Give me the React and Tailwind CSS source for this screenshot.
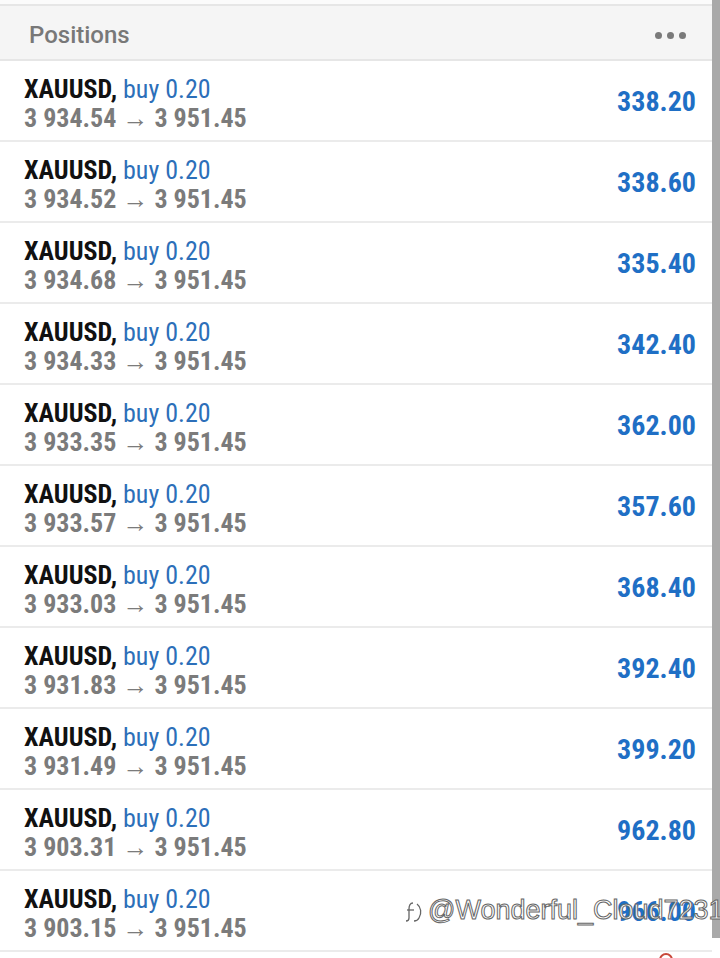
import React from 'react';

const rows = [
  ['3 934.54', '338.20'],
  ['3 934.52', '338.60'],
  ['3 934.68', '335.40'],
  ['3 934.33', '342.40'],
  ['3 933.35', '362.00'],
  ['3 933.57', '357.60'],
  ['3 933.03', '368.40'],
  ['3 931.83', '392.40'],
  ['3 931.49', '399.20'],
  ['3 903.31', '962.80'],
  ['3 903.15', '966.00'],
];

const font = { fontFamily: '"Roboto Condensed", "Liberation Sans Narrow", Roboto, sans-serif' };

const PositionRow = ({ open, profit }) => (
  <div className="h-[81px] shrink-0 border-b-2 border-[#ebebeb] flex items-center justify-between pl-[24px] pr-[16px]">
    <div className="flex flex-col pt-[6px]">
      <div className="text-[26px] leading-[29px] whitespace-nowrap">
        <span className="font-bold text-[#111]">XAUUSD,</span>{' '}
        <span className="text-[#2c6fb9]">buy 0.20</span>
      </div>
      <div className="text-[26px] leading-[29px] font-bold text-[#7b7b7b] whitespace-nowrap">
        {open} → 3 951.45
      </div>
    </div>
    <div className="text-[28px] font-bold text-[#1f6fc5] leading-none pt-[3px]">{profit}</div>
  </div>
);

export default function App() {
  return (
    <div className="relative w-[720px] h-[958px] overflow-hidden flex bg-white" style={font}>
      <div className="flex-1 flex flex-col">
        <div className="h-[4px] shrink-0 bg-[#fbfbfb]" />
        <div className="h-[57px] shrink-0 border-t-2 border-b-2 border-[#e6e6e6] bg-[#f5f5f5] flex items-center justify-between pt-[5px] pl-[29px] pr-[26px]">
          <span className="text-[24px] font-medium text-[#787878]" style={{ fontFamily: 'Roboto, sans-serif' }}>Positions</span>
          <div className="flex gap-[5px]">
            <span className="w-[7px] h-[7px] rounded-full bg-[#7a7a7a]" />
            <span className="w-[7px] h-[7px] rounded-full bg-[#7a7a7a]" />
            <span className="w-[7px] h-[7px] rounded-full bg-[#7a7a7a]" />
          </div>
        </div>
        {rows.map(([open, profit], i) => (
          <PositionRow key={i} open={open} profit={profit} />
        ))}
      </div>
      <div className="w-[8px] h-[938px] shrink-0 bg-[#a9a9a9]" />

      {/* watermark */}
      <div className="absolute left-[404px] top-[897px] flex items-center gap-[2px] text-[27px] leading-none text-white/90 [-webkit-text-stroke:1px_#666]" style={{ fontFamily: '"Liberation Sans", Arial, sans-serif' }}>
        <svg width="22" height="26" viewBox="0 0 22 26" fill="none" stroke="#666" strokeWidth="1.3">
          <path d="M9 5c-3 0-4 3-4 6v9c0 2-1 3-3 3" />
          <path d="M3 12h7" />
          <path d="M13 6c4 3 5 9 2 14-1 2-3 3-5 3" />
        </svg>
        <span>@Wonderful_Cloud7231</span>
      </div>
      <div className="absolute left-[659px] top-[953px] w-[14px] h-[14px] rounded-full border-2 border-[#c8483a]" />
    </div>
  );
}
